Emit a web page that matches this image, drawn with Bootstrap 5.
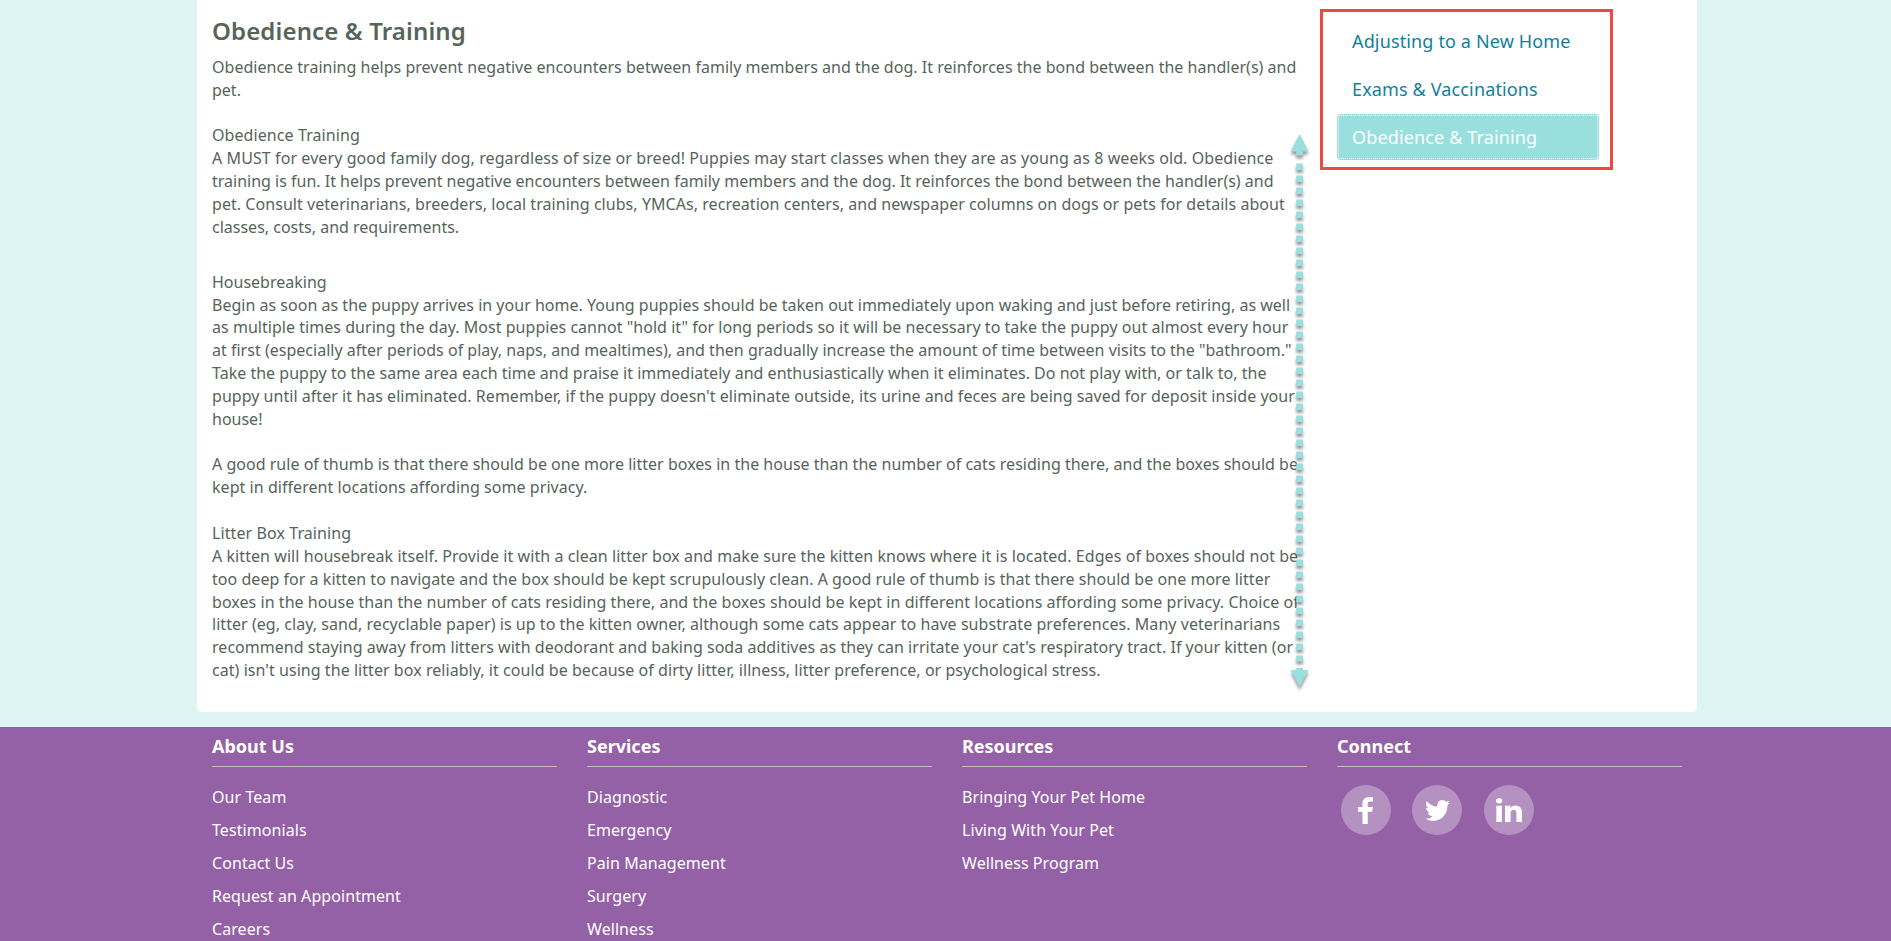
<!DOCTYPE html>
<html lang="en">
<head>
<meta charset="utf-8">
<title>Obedience &amp; Training</title>
<link href="https://cdn.jsdelivr.net/npm/bootstrap@5.3.0/dist/css/bootstrap.min.css" rel="stylesheet">
<style>
body{background:#dff5f4;font-family:"Noto Sans",sans-serif;font-size:16px;line-height:22.857px;color:#56645a;height:941px;overflow:hidden}
.wrap{width:1500px;margin-left:197px}
.page{height:712px;border-radius:0 0 5px 5px}
.pad15{padding-left:15px;padding-right:15px}
h1{font-size:24px;line-height:26px;margin:18px 0 11.7px;font-weight:600;letter-spacing:.14px}
.ln{white-space:nowrap;height:22.857px}
.gap-after{margin-bottom:32.3px}
.l1{letter-spacing:.014px}.l2{letter-spacing:.02px}.l3{letter-spacing:.036px}.l5{letter-spacing:.05px}.l6{letter-spacing:.064px}.l8{letter-spacing:.087px}
.side-box{width:293px;height:161px;margin:9px 0 0 -17px;border:3px solid #e94b43;padding:6px 11px 0 14px}
.side{display:block;height:46px;margin-bottom:2px;padding:12px 15px 10px;font-size:18px;line-height:23px;color:#0f7fa0;text-decoration:none;border-radius:4px;letter-spacing:.14px}
.side.active{background:#98dfde;color:#fff;outline:1px dotted #fff;outline-offset:-2px}
.arrow{left:1285px;top:130px;filter:drop-shadow(0 3px 1.5px rgba(60,45,60,.5))}
footer{background:#9461a6;margin-top:15px;height:214px;color:#fff}
footer h2{font-size:18px;line-height:20px;font-weight:700;margin:0 0 14px;padding:9px 0 10px;border-bottom:1px solid #c3bfc1}
.ft{display:block;height:33px;line-height:33px;color:#fff;text-decoration:none;letter-spacing:.07px}
.socials{gap:21.7px;padding:4px 0 0 3.7px}
.soc{width:50px;height:50px;background:#b491c1}
</style>
</head>
<body class="position-relative">
<div class="page wrap bg-white">
<div class="row g-0">
<main class="col-9 pad15">
<h1>Obedience &amp; Training</h1>
<div class="ln l2">Obedience training helps prevent negative encounters between family members and the dog. It reinforces the bond between the handler(s) and</div>
<div class="ln">pet.</div>
<div class="ln"></div>
<div class="ln l8">Obedience Training</div>
<div class="ln l8">A MUST for every good family dog, regardless of size or breed! Puppies may start classes when they are as young as 8 weeks old. Obedience</div>
<div class="ln">training is fun. It helps prevent negative encounters between family members and the dog. It reinforces the bond between the handler(s) and</div>
<div class="ln l5">pet. Consult veterinarians, breeders, local training clubs, YMCAs, recreation centers, and newspaper columns on dogs or pets for details about</div>
<div class="ln gap-after">classes, costs, and requirements.</div>
<div class="ln">Housebreaking</div>
<div class="ln l1">Begin as soon as the puppy arrives in your home. Young puppies should be taken out immediately upon waking and just before retiring, as well</div>
<div class="ln l3">as multiple times during the day. Most puppies cannot "hold it" for long periods so it will be necessary to take the puppy out almost every hour</div>
<div class="ln l1">at first (especially after periods of play, naps, and mealtimes), and then gradually increase the amount of time between visits to the "bathroom."</div>
<div class="ln l2">Take the puppy to the same area each time and praise it immediately and enthusiastically when it eliminates. Do not play with, or talk to, the</div>
<div class="ln l3">puppy until after it has eliminated. Remember, if the puppy doesn't eliminate outside, its urine and feces are being saved for deposit inside your</div>
<div class="ln">house!</div>
<div class="ln"></div>
<div class="ln l2">A good rule of thumb is that there should be one more litter boxes in the house than the number of cats residing there, and the boxes should be</div>
<div class="ln l5">kept in different locations affording some privacy.</div>
<div class="ln"></div>
<div class="ln l8">Litter Box Training</div>
<div class="ln l6">A kitten will housebreak itself. Provide it with a clean litter box and make sure the kitten knows where it is located. Edges of boxes should not be</div>
<div class="ln l3">too deep for a kitten to navigate and the box should be kept scrupulously clean. A good rule of thumb is that there should be one more litter</div>
<div class="ln l5">boxes in the house than the number of cats residing there, and the boxes should be kept in different locations affording some privacy. Choice of</div>
<div class="ln l5">litter (eg, clay, sand, recyclable paper) is up to the kitten owner, although some cats appear to have substrate preferences. Many veterinarians</div>
<div class="ln l3">recommend staying away from litters with deodorant and baking soda additives as they can irritate your cat's respiratory tract. If your kitten (or</div>
<div class="ln l5">cat) isn't using the litter box reliably, it could be because of dirty litter, illness, litter preference, or psychological stress.</div>
</main>
<div class="col-3 pad15">
<nav class="side-box">
<a class="side" href="#">Adjusting to a New Home</a>
<a class="side" href="#">Exams &amp; Vaccinations</a>
<a class="side active" href="#">Obedience &amp; Training</a>
</nav>
</div>
</div>
</div>
<svg class="arrow position-absolute" width="30" height="564" viewBox="0 0 30 564" fill="#98dfde">
<path d="M14.6 4 23.6 21.5H18V25.5H11.2V21.5H5.6z"/>
<path d="M14.6 33.6V531.5" stroke="#98dfde" stroke-width="6.6" stroke-dasharray="6.4 5.6"/>
<path d="M14.6 557 23.6 540H18V537.7H11.2V540H5.6z"/>
</svg>
<footer>
<div class="wrap">
<div class="row g-0">
<div class="col-3 pad15">
<h2>About Us</h2>
<a class="ft" href="#">Our Team</a>
<a class="ft" href="#">Testimonials</a>
<a class="ft" href="#">Contact Us</a>
<a class="ft" href="#">Request an Appointment</a>
<a class="ft" href="#">Careers</a>
</div>
<div class="col-3 pad15">
<h2>Services</h2>
<a class="ft" href="#">Diagnostic</a>
<a class="ft" href="#">Emergency</a>
<a class="ft" href="#">Pain Management</a>
<a class="ft" href="#">Surgery</a>
<a class="ft" href="#">Wellness</a>
</div>
<div class="col-3 pad15">
<h2>Resources</h2>
<a class="ft" href="#">Bringing Your Pet Home</a>
<a class="ft" href="#">Living With Your Pet</a>
<a class="ft" href="#">Wellness Program</a>
</div>
<div class="col-3 pad15">
<h2>Connect</h2>
<div class="d-flex socials">
<a class="soc rounded-circle d-flex align-items-center justify-content-center" href="#" aria-label="Facebook"><svg width="15" height="27" viewBox="95 0 864 1664" preserveAspectRatio="none" fill="#fff"><path d="M959 12v264h-157q-86 0-116 36t-30 108v189h293l-39 296h-254v759h-306v-759h-255v-296h255v-218q0-186 104-288.5t277-102.5q147 0 228 12z"/></svg></a>
<a class="soc rounded-circle d-flex align-items-center justify-content-center" href="#" aria-label="Twitter"><svg width="25" height="21" viewBox="108 256 1576 1280" preserveAspectRatio="none" fill="#fff"><path d="M1684 408q-67 98-162 167 1 14 1 42 0 130-38 259.5t-115.5 248.5-184.5 210.5-258 146-323 54.5q-271 0-496-145 35 4 78 4 225 0 401-138-105-2-188-64.5t-114-159.5q33 5 61 5 43 0 85-11-112-23-185.5-111.5t-73.5-205.5v-4q68 38 146 41-66-44-105-115t-39-154q0-88 44-163 121 149 294.5 238.5t371.5 99.5q-8-38-8-74 0-134 94.5-228.5t228.5-94.5q140 0 236 102 109-21 205-78-37 115-142 178 93-10 186-50z"/></svg></a>
<a class="soc rounded-circle d-flex align-items-center justify-content-center" href="#" aria-label="LinkedIn"><svg width="26" height="24" viewBox="128 148 1536 1468" preserveAspectRatio="none" fill="#fff"><path d="M477 625v991h-330v-991h330zm21-306q1 73-50.5 122t-135.5 49h-2q-82 0-132-49t-50-122q0-74 51.5-122.5t134.5-48.5 133 48.5 51 122.5zm1166 729v568h-329v-530q0-105-40.5-164.5t-126.5-59.5q-63 0-105.5 34.5t-63.5 85.5q-11 30-11 81v553h-329q2-399 2-647t-1-296l-1-48h329v144h-2q20-32 41-56t56.5-52 87-43.5 114.5-15.5q171 0 275 113.5t104 332.5z"/></svg></a>
</div>
</div>
</div>
</div>
</footer>
<script src="https://cdn.jsdelivr.net/npm/bootstrap@5.3.0/dist/js/bootstrap.bundle.min.js"></script>
</body>
</html>
